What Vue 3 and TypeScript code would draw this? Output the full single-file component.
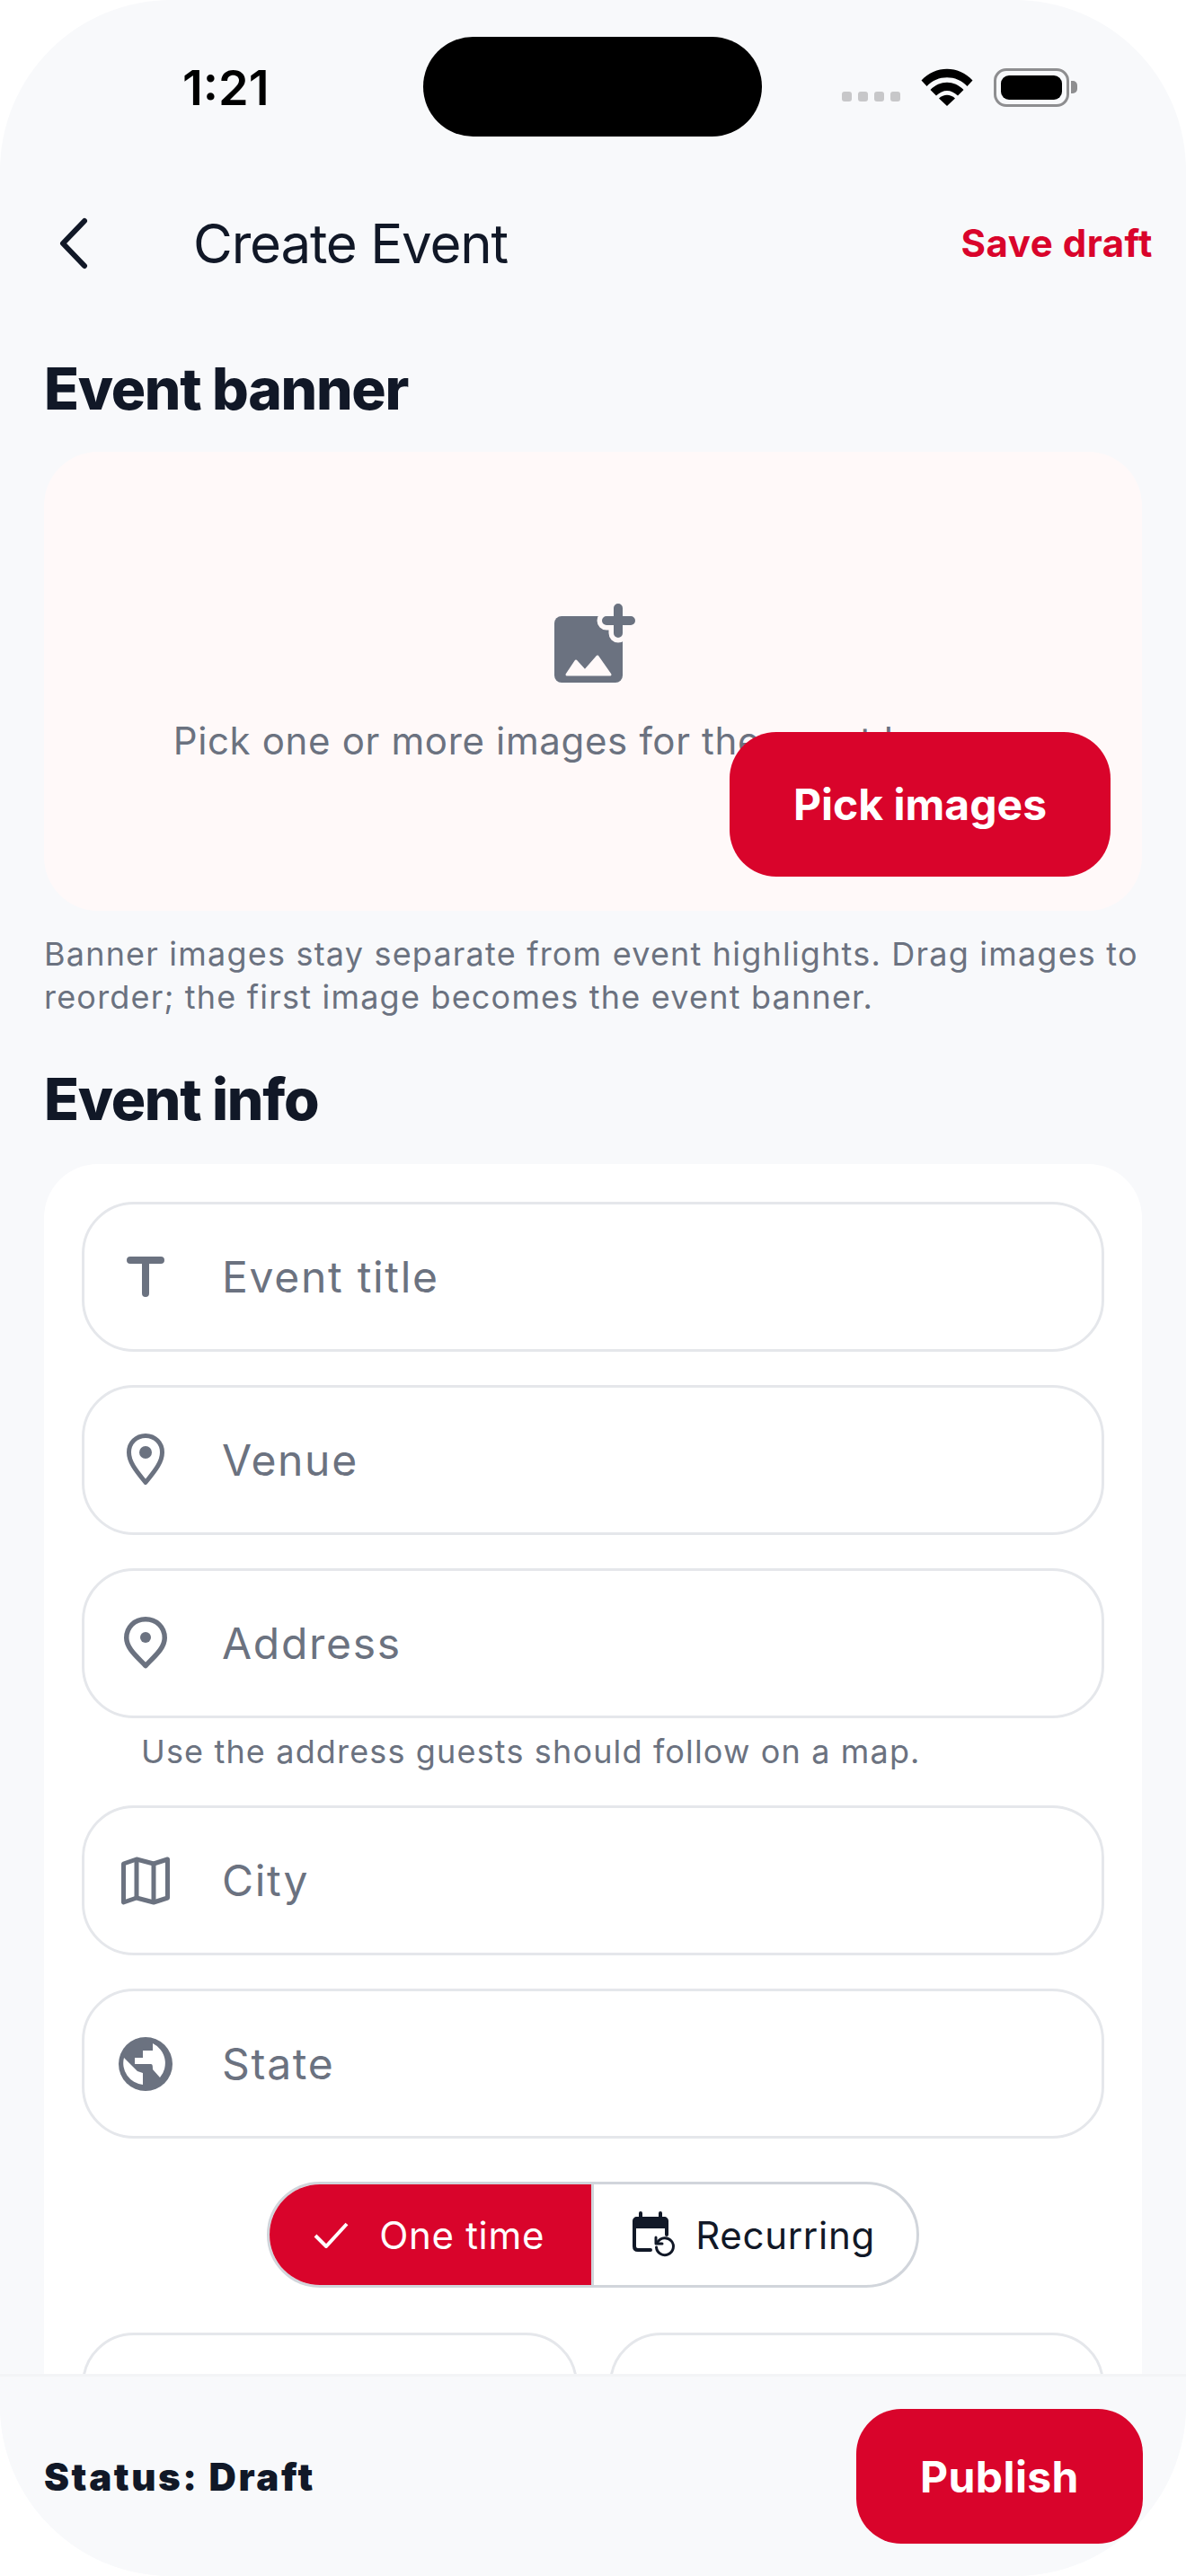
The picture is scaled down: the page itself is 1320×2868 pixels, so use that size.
<script setup lang="ts">
const fieldsTop = [
  { label: 'Event title', icon: 'title' },
  { label: 'Venue', icon: 'pin' },
  { label: 'Address', icon: 'pin-round' },
]
const fieldsBottom = [
  { label: 'City', icon: 'map' },
  { label: 'State', icon: 'globe' },
]
</script>

<template>
  <div class="device">
    <div class="status-bar">
      <span class="clock">1:21</span>
      <div class="island" />
      <div class="status-icons">
        <div class="signal"><i /><i /><i /><i /></div>
        <svg class="wifi" width="58" height="42" viewBox="0 0 58 42">
          <path d="M0.5 13.5C16 -3.5 42 -3.5 57.5 13.5L51.5 20C39.5 7 18.5 7 6.5 20Z" fill="#000" />
          <path d="M10.5 24C21 13 37 13 47.5 24L41 30.5C33.5 23 24.5 23 17 30.5Z" fill="#000" />
          <path d="M20 33.5C25.5 28.5 32.5 28.5 38 33.5L29 42Z" fill="#000" />
        </svg>
        <div class="battery"><div class="battery-fill" /></div>
        <div class="battery-cap" />
      </div>
    </div>

    <header class="top-bar">
      <svg class="back" width="34" height="58" viewBox="0 0 34 58" fill="none">
        <path d="M29 4L5 29L29 54" stroke="#111827" stroke-width="6" stroke-linecap="round" stroke-linejoin="round" />
      </svg>
      <h1 class="page-title">Create Event</h1>
      <button class="save-draft">Save draft</button>
    </header>

    <main class="content">
      <h2 class="section-title">Event banner</h2>
      <section class="banner">
        <svg class="banner-icon" width="90" height="88" viewBox="0 0 90 88" fill="none">
          <rect x="0" y="14" width="76" height="74" rx="8" fill="#6b7280" />
          <path d="M58 19H85M71 5V33" stroke="#fff9f9" stroke-width="21" stroke-linecap="round" />
          <path d="M14 79L24 64L34 75L48 59L62 79Z" fill="#fff9f9" stroke="#fff9f9" stroke-width="3" stroke-linejoin="round" />
          <path d="M58 19H85M71 5V33" stroke="#6b7280" stroke-width="10" stroke-linecap="round" />
        </svg>
        <p class="banner-text">Pick one or more images for the event banner</p>
        <button class="pick-button">Pick images</button>
      </section>
      <p class="helper">Banner images stay separate from event highlights. Drag images to reorder; the first image becomes the event banner.</p>

      <h2 class="section-title info-title">Event info</h2>
      <section class="card">
        <div v-for="field in fieldsTop" :key="field.label" class="field">
          <span class="field-icon">
            <svg v-if="field.icon === 'title'" width="42" height="46" viewBox="0 0 42 46">
              <path d="M4 4H38M21 4V41" fill="none" stroke="#6b7280" stroke-width="8" stroke-linecap="round" />
            </svg>
            <svg v-else-if="field.icon === 'pin'" width="42" height="59" viewBox="0 0 42 59" fill="none">
              <path d="M21 54.5C9 40 2.5 31 2.5 21C2.5 10.5 10.500 2.5 21 2.5C31.5 2.5 39.5 10.5 39.5 21C39.5 31 33 40 21 54.5Z" stroke="#6b7280" stroke-width="5" stroke-linejoin="round" />
              <circle cx="21" cy="21" r="7" fill="#6b7280" />
            </svg>
            <svg v-else width="48" height="59" viewBox="0 0 48 59" fill="none">
              <path d="M24 54.5C14 44 2.75 35 2.75 23.5C2.75 11.5 12 2.75 24 2.75C36 2.75 45.25 11.5 45.25 23.5C45.25 35 34 44 24 54.5Z" stroke="#6b7280" stroke-width="5.5" stroke-linejoin="round" />
              <circle cx="24" cy="23" r="6" fill="#6b7280" />
            </svg>
          </span>
          <span class="field-label">{{ field.label }}</span>
        </div>
        <p class="field-hint">Use the address guests should follow on a map.</p>
        <div v-for="field in fieldsBottom" :key="field.label" class="field">
          <span class="field-icon">
            <svg v-if="field.icon === 'map'" width="54" height="54" viewBox="0 0 54 54" fill="none">
              <path d="M2.5 8L17 3L36 8L51.5 3V46L36 51L17 46L2.5 51Z" stroke="#6b7280" stroke-width="5" stroke-linejoin="round" />
              <path d="M17 3V46M36 8V51" stroke="#6b7280" stroke-width="5" />
            </svg>
            <svg v-else width="60" height="60" viewBox="0 0 60 60">
              <circle cx="30" cy="30" r="30" fill="#6b7280" />
              <path d="M38 7V15H27V23H18V30H36C38 30 38 33 38 36L46 45A24.5 24.5 0 0 0 38 7Z" fill="#fff" />
              <path d="M6 23L21 38L27 40V53A24 24 0 0 1 6 23Z" fill="#fff" />
            </svg>
          </span>
          <span class="field-label">{{ field.label }}</span>
        </div>

        <div class="toggle-row">
          <div class="toggle">
            <div class="segment segment-on">
              <svg width="39" height="29" viewBox="0 0 39 29" fill="none">
                <path d="M2 15L14 27L37 2" stroke="#fff" stroke-width="4" />
              </svg>
              <span>One time</span>
            </div>
            <div class="segment">
              <svg width="48" height="52" viewBox="0 0 48 52" fill="none">
                <path d="M0 19V11C0 8 2 6 5 6H35C38 6 40 8 40 11V19Z" fill="#111827" />
                <path d="M9 2V7M31 2V7" stroke="#111827" stroke-width="4" stroke-linecap="round" />
                <path d="M2 15V39C2 41.5 3.5 43 6 43H20M38 15V26" stroke="#111827" stroke-width="4" stroke-linecap="round" />
                <path d="M28 34A9.5 9.5 0 1 1 26.5 40" stroke="#111827" stroke-width="3" stroke-linecap="round" />
                <path d="M26 29V36H33" stroke="#111827" stroke-width="3" stroke-linecap="round" stroke-linejoin="round" />
              </svg>
              <span>Recurring</span>
            </div>
          </div>
        </div>

        <div class="field-pair">
          <div class="field" />
          <div class="field" />
        </div>
      </section>
    </main>

    <footer class="footer">
      <span class="status-text">Status: Draft</span>
      <button class="publish">Publish</button>
    </footer>
  </div>
</template>

<style>
body {
  background: #fff;
}
</style>

<style scoped>
.device {
  width: 1320px;
  height: 2868px;
  display: flex;
  flex-direction: column;
  overflow: hidden;
  border-radius: 190px;
  background: #f8f9fb;
  font-family: Inter, "Liberation Sans", sans-serif;
  color: #111827;
}

.status-bar {
  flex: none;
  height: 196px;
  padding: 41px 0 0 203px;
  display: flex;
  align-items: flex-start;
  box-sizing: border-box;
}

.clock {
  width: 100px;
  margin-top: 26px;
  font-size: 54px;
  line-height: 62px;
  font-weight: 600;
  color: #000;
}

.island {
  width: 377px;
  height: 111px;
  margin-left: 168px;
  border-radius: 56px;
  background: #000;
}

.status-icons {
  height: 44px;
  margin: 34px 0 0 89px;
  display: flex;
  align-items: center;
}

.signal {
  display: flex;
  gap: 7px;
  margin: 20px 23px 0 0;
}

.signal i {
  display: block;
  width: 11px;
  height: 11px;
  border-radius: 3px;
  background: #c7c7c9;
}

.wifi {
  margin-right: 23px;
}

.battery {
  width: 84px;
  height: 43px;
  padding: 5px;
  border: 3px solid #8e8e90;
  border-radius: 14px;
  box-sizing: border-box;
}

.battery-fill {
  height: 100%;
  border-radius: 9px;
  background: #000;
}

.battery-cap {
  width: 7px;
  height: 14px;
  margin-left: 2px;
  border-radius: 0 5px 5px 0;
  background: #8e8e90;
}

.top-bar {
  flex: none;
  height: 150px;
  padding: 0 37px 0 65px;
  display: flex;
  align-items: center;
  box-sizing: border-box;
}

.page-title {
  margin: 0 0 0 116px;
  flex: 1;
  font-size: 60px;
  line-height: 72px;
  font-weight: 400;
  letter-spacing: -1.2px;
  color: #111827;
}

.save-draft {
  margin-top: -2px;
  padding: 0;
  border: 0;
  background: none;
  font: inherit;
  font-size: 42px;
  font-weight: 700;
  letter-spacing: 0.5px;
  color: #d9042b;
}

.content {
  flex: 1;
  min-height: 0;
  overflow: hidden;
  padding: 49px 49px 0;
}

.section-title {
  margin: 0;
  font-size: 64px;
  line-height: 76px;
  font-weight: 800;
  letter-spacing: -1.3px;
  color: #111827;
}

.banner {
  position: relative;
  height: 511px;
  margin-top: 32px;
  padding-top: 169px;
  display: flex;
  flex-direction: column;
  align-items: center;
  border-radius: 60px;
  background: #fff9f9;
  box-sizing: border-box;
}

.banner-icon {
  margin-left: 4px;
}

.banner-text {
  margin: 39px 0 0;
  font-size: 42px;
  line-height: 52px;
  letter-spacing: 0.65px;
  color: #6b7280;
}

.pick-button {
  position: absolute;
  top: 312px;
  right: 35px;
  width: 424px;
  height: 161px;
  border: 0;
  border-radius: 52px;
  background: #d9042b;
  font: inherit;
  font-size: 48px;
  font-weight: 700;
  color: #fff;
}

.helper {
  margin: 24px 0 0;
  font-size: 36px;
  line-height: 48px;
  letter-spacing: 1.2px;
  color: #6b7280;
}

.info-title {
  margin-top: 52px;
}

.card {
  margin-top: 34px;
  padding: 42px 42px 0;
  display: flex;
  flex-direction: column;
  gap: 37px;
  border-radius: 60px;
  background: #fff;
}

.field {
  height: 167px;
  padding-left: 37px;
  display: flex;
  align-items: center;
  border: 3px solid #e5e7eb;
  border-radius: 58px;
  background: #fff;
  box-sizing: border-box;
}

.field-icon {
  width: 62px;
  flex: none;
  display: flex;
  justify-content: center;
}

.field-label {
  margin-left: 54px;
  font-size: 48px;
  letter-spacing: 1.7px;
  color: #6b7280;
}

.field-hint {
  margin: -22px 0 1px 66px;
  font-size: 36px;
  line-height: 44px;
  letter-spacing: 1.15px;
  color: #6b7280;
}

.toggle-row {
  display: flex;
  justify-content: center;
  margin-top: 11px;
}

.toggle {
  height: 118px;
  display: flex;
  border: 3px solid #d1d5db;
  border-radius: 59px;
  overflow: hidden;
  box-sizing: border-box;
}

.segment {
  display: flex;
  align-items: center;
  gap: 22px;
  padding: 0 46px 0 43px;
  font-size: 42px;
  letter-spacing: 0.7px;
  color: #111827;
}

.segment-on {
  width: 361px;
  padding: 0 0 0 49px;
  gap: 34px;
  border-right: 3px solid #d1d5db;
  background: #d9042b;
  color: #fff;
  box-sizing: border-box;
}

.field-pair {
  display: grid;
  grid-template-columns: 552px 551px;
  justify-content: space-between;
  margin-top: 13px;
}

.footer {
  flex: none;
  height: 225px;
  padding: 36px 48px 0 49px;
  display: flex;
  align-items: flex-start;
  justify-content: space-between;
  border-top: 3px solid #f3f4f6;
  background: #f8f9fb;
  box-sizing: border-box;
}

.status-text {
  margin-top: 50px;
  font-size: 42px;
  line-height: 52px;
  font-weight: 900;
  letter-spacing: 2.6px;
  color: #111827;
}

.publish {
  width: 319px;
  height: 150px;
  border: 0;
  border-radius: 50px;
  background: #d9042b;
  font: inherit;
  font-size: 48px;
  font-weight: 700;
  letter-spacing: 0.4px;
  color: #fff;
}
</style>
